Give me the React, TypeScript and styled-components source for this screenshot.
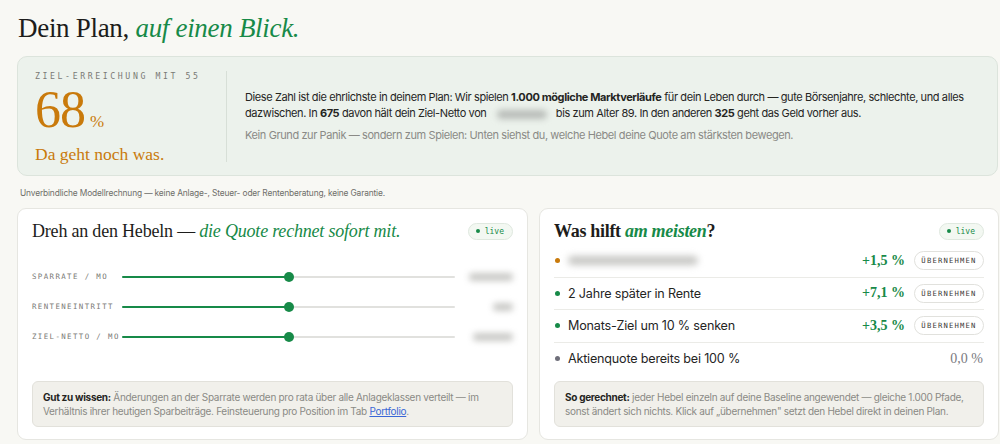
import React from "react";
import styled, { createGlobalStyle } from "styled-components";

const serif = `"Liberation Serif", "DejaVu Serif", serif`;
const sans = `Inter, "Noto Sans", sans-serif`;
const mono = `"DejaVu Sans Mono", "Liberation Mono", monospace`;

const green = "#178a48";
const orange = "#c97a0b";

const Global = createGlobalStyle`
  html, body { margin: 0; padding: 0; background: #f8f8f4; }
  body { font-family: ${sans}; color: #1d1d1b; }
  * { box-sizing: border-box; }
`;

const Page = styled.div`
  width: 1000px;
  height: 444px;
  overflow: hidden;
  padding: 11px 2px 0 17px;
  display: flex;
  flex-direction: column;
`;

const Title = styled.h1`
  margin: 0 0 0 1px;
  font-family: ${serif};
  font-weight: 400;
  font-size: 27px;
  line-height: 34px;
  letter-spacing: -0.3px;
  color: #1d1d1b;
`;

const Accent = styled.em<{ $color?: string }>`
  font-style: italic;
  color: ${(p) => p.$color || green};
`;

const PlanCard = styled.section`
  margin-top: 11px;
  height: 120px;
  background: #ecf2ec;
  border: 1px solid #dce4dc;
  border-radius: 10px;
  display: flex;
  align-items: stretch;
  padding: 0 18px 0 17px;
`;

const Score = styled.div`
  width: 174px;
  flex: none;
  display: flex;
  flex-direction: column;
  padding-top: 14px;
`;

const MonoLabel = styled.div<{ $size?: number; $spacing?: number }>`
  font-family: ${mono};
  font-size: ${(p) => p.$size || 8}px;
  line-height: 10px;
  letter-spacing: ${(p) => p.$spacing ?? 2}px;
  color: #7a7a76;
  text-transform: uppercase;
  white-space: nowrap;
`;

const BigNumber = styled.div`
  font-family: ${serif};
  color: ${orange};
  font-size: 52px;
  line-height: 40px;
  margin-top: 9px;
  display: flex;
  align-items: baseline;
  gap: 5px;
  letter-spacing: -1px;
`;

const Percent = styled.span`
  font-size: 17px;
  letter-spacing: 0;
`;

const Verdict = styled.div`
  font-family: ${serif};
  color: ${orange};
  font-size: 17.5px;
  line-height: 20px;
  margin-top: 2px;
`;

const Divider = styled.div`
  width: 1px;
  margin: 14px 18px 13px 17px;
  background: #d7dfd7;
`;

const Explain = styled.div`
  flex: 1;
  align-self: center;
  font-size: 11px;
  line-height: 16px;
  letter-spacing: -0.4px;
  color: #25251f;
`;

const Muted = styled.p`
  margin: 6px 0 0;
  color: #8a8a86;
`;

const Para = styled.p`
  margin: 0;
`;

const Blur = styled.span<{ $w: number }>`
  display: inline-block;
  width: ${(p) => p.$w}px;
  height: 9px;
  vertical-align: middle;
  background: #b8bcb8;
  border-radius: 5px;
  filter: blur(3px);
  margin: 0 6px 0 8px;
`;

const Footnote = styled.div`
  margin: 12px 0 0 3px;
  font-size: 8.4px;
  color: #6e6e69;
  letter-spacing: -0.15px;
`;

const Panels = styled.div`
  margin-top: 10px;
  display: grid;
  grid-template-columns: 511px 460px;
  gap: 11px;
`;

const Panel = styled.section`
  background: #ffffff;
  border: 1px solid #e6e6e1;
  border-radius: 9px;
  height: 232px;
  padding: 12px 14px 12px 14px;
  display: flex;
  flex-direction: column;
`;

const PanelHead = styled.div`
  display: flex;
  align-items: center;
  justify-content: space-between;
  height: 20px;
`;

const PanelTitle = styled.h2`
  margin: 0;
  font-family: ${serif};
  font-weight: 700;
  font-size: 18px;
  letter-spacing: -0.3px;
  white-space: nowrap;
`;

const PanelTitleLight = styled(PanelTitle)`
  font-weight: 400;
  letter-spacing: -0.2px;
`;

const LiveBadge = styled.span`
  display: inline-flex;
  align-items: center;
  gap: 5px;
  height: 17px;
  padding: 0 8px 0 7px;
  border: 1px solid #dfe8df;
  background: #f3f8f2;
  border-radius: 9px;
  font-family: ${mono};
  font-size: 8px;
  color: ${green};
`;

const Dot = styled.span<{ $color: string; $size?: number }>`
  width: ${(p) => p.$size || 4}px;
  height: ${(p) => p.$size || 4}px;
  border-radius: 50%;
  background: ${(p) => p.$color};
  flex: none;
`;

const Sliders = styled.div`
  margin-top: 27px;
  display: flex;
  flex-direction: column;
  gap: 12px;
`;

const SliderRow = styled.div`
  display: grid;
  grid-template-columns: 90px 333px 1fr;
  align-items: center;
  height: 18px;
`;

const Track = styled.div`
  position: relative;
  height: 2px;
  background: #e1e1de;
  border-radius: 1px;
`;

const Fill = styled.div`
  position: absolute;
  left: 0;
  top: 0;
  bottom: 0;
  background: ${green};
  border-radius: 1px;
`;

const Thumb = styled.div`
  position: absolute;
  top: 50%;
  width: 10px;
  height: 10px;
  margin: -5px 0 0 -5px;
  border-radius: 50%;
  background: ${green};
`;

const BlurValue = styled.div<{ $w: number }>`
  justify-self: end;
  width: ${(p) => p.$w}px;
  height: 8px;
  background: #c9c9c6;
  border-radius: 4px;
  filter: blur(3px);
`;

const InfoBox = styled.div`
  margin-top: auto;
  background: #f1f0eb;
  border: 1px solid #e2e1db;
  border-radius: 6px;
  padding: 8px 10px;
  font-size: 10px;
  line-height: 14px;
  letter-spacing: -0.3px;
  color: #8a8a85;
`;

const Strong = styled.b`
  color: #25251f;
  font-weight: 700;
`;

const Link = styled.a`
  color: #3a66d6;
  text-decoration: underline;
`;

const LeverList = styled.div`
  margin-top: 4px;
  display: flex;
  flex-direction: column;
`;

const LeverRow = styled.div<{ $last?: boolean }>`
  display: flex;
  align-items: center;
  height: 32.5px;
  border-bottom: ${(p) => (p.$last ? "none" : "1px solid #ebebe7")};
  gap: 8px;
  padding-left: 1px;
`;

const LeverText = styled.span`
  flex: 1;
  font-size: 12.6px;
  color: #25251f;
  letter-spacing: -0.2px;
`;

const Delta = styled.span<{ $neutral?: boolean }>`
  font-family: ${serif};
  font-size: 14px;
  color: ${(p) => (p.$neutral ? "#7a7a80" : green)};
  font-weight: ${(p) => (p.$neutral ? 400 : 700)};
  margin-right: 1px;
`;

const TakeButton = styled.button`
  height: 19px;
  width: 70px;
  border: 1px solid #e1e1dd;
  background: #fff;
  border-radius: 10px;
  font-family: ${mono};
  font-size: 7.2px;
  letter-spacing: 1.2px;
  color: #3a3a36;
  padding: 0;
`;

const BlurText = styled.span`
  display: inline-block;
  width: 130px;
  height: 9px;
  background: #c6c6c3;
  border-radius: 5px;
  filter: blur(3.5px);
`;

const sliders = [
  { label: "Sparrate / mo", pct: 50, w: 44 },
  { label: "Renteneintritt", pct: 50, w: 20 },
  { label: "Ziel-Netto / mo", pct: 50, w: 40 },
];

const levers = [
  { text: null, color: orange, delta: "+1,5 %" },
  { text: "2 Jahre später in Rente", color: green, delta: "+7,1 %" },
  { text: "Monats-Ziel um 10 % senken", color: green, delta: "+3,5 %" },
  { text: "Aktienquote bereits bei 100 %", color: "#6f6f7a", delta: "0,0 %", neutral: true },
];

export default function App() {
  return (
    <>
      <Global />
      <Page>
        <Title>
          Dein Plan, <Accent>auf einen Blick.</Accent>
        </Title>

        <PlanCard>
          <Score>
            <MonoLabel $size={8.2} $spacing={2.6}>Ziel-Erreichung mit 55</MonoLabel>
            <BigNumber>
              68<Percent>%</Percent>
            </BigNumber>
            <Verdict>Da geht noch was.</Verdict>
          </Score>
          <Divider />
          <Explain>
            <Para>
              Diese Zahl ist die ehrlichste in deinem Plan: Wir spielen <Strong>1.000 mögliche Marktverläufe</Strong> für
              dein Leben durch — gute Börsenjahre, schlechte, und alles dazwischen. In <Strong>675</Strong> davon hält dein
              Ziel-Netto von <Blur $w={50} /> bis zum Alter 89. In den anderen <Strong>325</Strong> geht das Geld vorher aus.
            </Para>
            <Muted>
              Kein Grund zur Panik — sondern zum Spielen: Unten siehst du, welche Hebel deine Quote am stärksten bewegen.
            </Muted>
          </Explain>
        </PlanCard>

        <Footnote>
          Unverbindliche Modellrechnung — keine Anlage-, Steuer- oder Rentenberatung, keine Garantie.
        </Footnote>

        <Panels>
          <Panel>
            <PanelHead>
              <PanelTitleLight>
                Dreh an den Hebeln — <Accent>die Quote rechnet sofort mit.</Accent>
              </PanelTitleLight>
              <LiveBadge>
                <Dot $color={green} />
                live
              </LiveBadge>
            </PanelHead>
            <Sliders>
              {sliders.map((s) => (
                <SliderRow key={s.label}>
                  <MonoLabel $size={7.4} $spacing={1.4}>{s.label}</MonoLabel>
                  <Track>
                    <Fill style={{ width: `${s.pct}%` }} />
                    <Thumb style={{ left: `${s.pct}%` }} />
                  </Track>
                  <BlurValue $w={s.w} />
                </SliderRow>
              ))}
            </Sliders>
            <InfoBox>
              <Strong>Gut zu wissen:</Strong> Änderungen an der Sparrate werden pro rata über alle Anlageklassen verteilt — im
              Verhältnis ihrer heutigen Sparbeiträge. Feinsteuerung pro Position im Tab <Link>Portfolio</Link>.
            </InfoBox>
          </Panel>

          <Panel>
            <PanelHead>
              <PanelTitle>
                Was hilft <Accent>am meisten</Accent>?
              </PanelTitle>
              <LiveBadge>
                <Dot $color={green} />
                live
              </LiveBadge>
            </PanelHead>
            <LeverList>
              {levers.map((l, i) => (
                <LeverRow key={i} $last={i === levers.length - 1}>
                  <Dot $color={l.color} $size={5} />
                  <LeverText>{l.text ?? <BlurText />}</LeverText>
                  <Delta $neutral={l.neutral}>{l.delta}</Delta>
                  {!l.neutral && <TakeButton>ÜBERNEHMEN</TakeButton>}
                </LeverRow>
              ))}
            </LeverList>
            <InfoBox>
              <Strong>So gerechnet:</Strong> jeder Hebel einzeln auf deine Baseline angewendet — gleiche 1.000 Pfade,
              sonst ändert sich nichts. Klick auf „übernehmen" setzt den Hebel direkt in deinen Plan.
            </InfoBox>
          </Panel>
        </Panels>
      </Page>
    </>
  );
}
